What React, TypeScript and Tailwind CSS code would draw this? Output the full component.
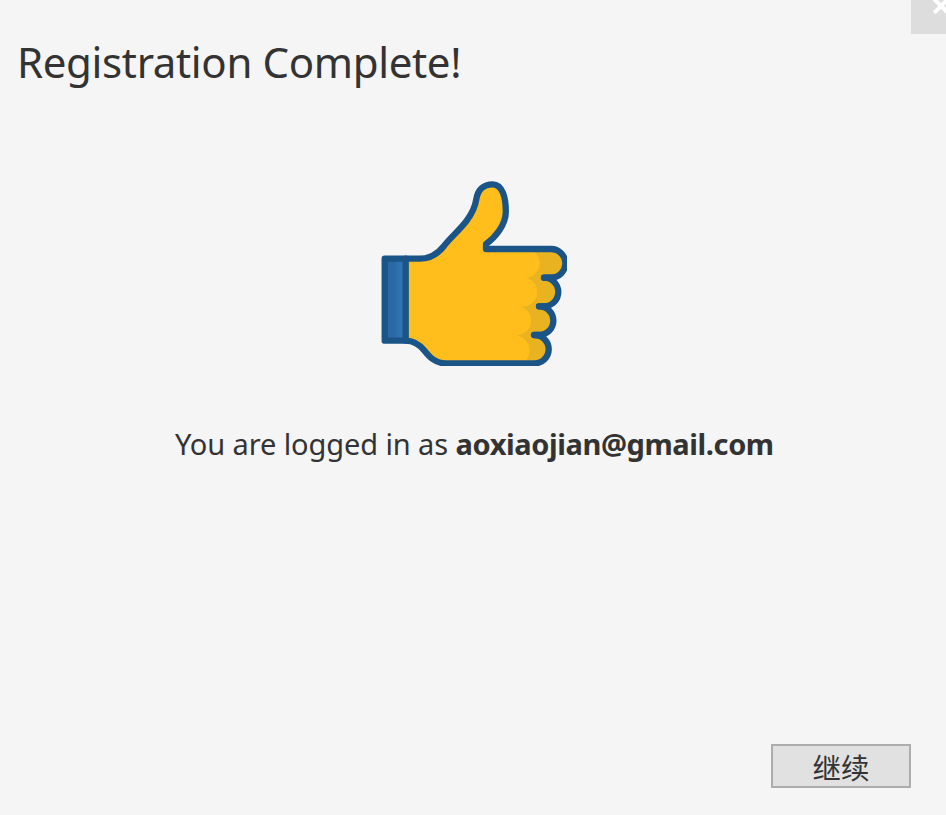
function ThumbsUp() {
  return (
    <svg className="block h-[185px] w-[186px]" viewBox="0 0 186 185" fill="none" aria-hidden="true">
      <defs>
        <linearGradient id="cuff" x1="0" x2="1">
          <stop offset="0.45" stopColor="#2b69a6" />
          <stop offset="0.75" stopColor="#3074b4" />
        </linearGradient>
        <clipPath id="hand">
          <path d="M24.7 77.7H39C49 77.7 57.3 72.3 63 65C69 56.7 78.3 49.7 85.7 39.7C92.3 30.7 94.3 25 95.3 18.3C96.7 9 102.3 3.3 111.7 3.3C121.7 3.3 124.8 17.3 124.8 30.7C124.8 44 114 56.7 105 63V68H170A14.3 14.3 0 0 1 170 96.7H163A14.3 14.3 0 0 1 163 125.3H158A14.3 14.3 0 0 1 158 154H153.5A14.2 14.2 0 0 1 153.5 182.4H65C54 182.4 48.3 175.7 43.5 169.7C38.5 163.7 33 159.7 24.7 159.7Z" />
        </clipPath>
      </defs>
      <g clipPath="url(#hand)">
        <rect width="186" height="185" fill="#e8b221" />
        <path
          d="M0 0H140V68H144.4A14.3 14.3 0 0 1 144.4 96.7H145A14.3 14.3 0 0 1 138 125.3A14.3 14.3 0 0 1 133 154A14.3 14.3 0 0 1 133 185H0Z"
          fill="#ffbe1b"
        />
      </g>
      <path d="M3.7 77.7H24.7V159.7H3.7Z" fill="url(#cuff)" />
      <g stroke="#1b5487" strokeWidth="6.3" strokeLinecap="round" strokeLinejoin="round">
        <path d="M3.7 77.7H24.7V159.7H3.7Z" />
        <path d="M24.7 77.7H39C49 77.7 57.3 72.3 63 65C69 56.7 78.3 49.7 85.7 39.7C92.3 30.7 94.3 25 95.3 18.3C96.7 9 102.3 3.3 111.7 3.3C121.7 3.3 124.8 17.3 124.8 30.7C124.8 44 114 56.7 105 63V68H170A14.3 14.3 0 0 1 170 96.7H163A14.3 14.3 0 0 1 163 125.3H158A14.3 14.3 0 0 1 158 154H153.5A14.2 14.2 0 0 1 153.5 182.4H65C54 182.4 48.3 175.7 43.5 169.7C38.5 163.7 33 159.7 24.7 159.7" />
        <path d="M172 96.7H163M163 125.3H158M158 154H153" />
      </g>
    </svg>
  );
}

export default function App() {
  return (
    <main className="relative flex h-[815px] w-[946px] flex-col overflow-hidden bg-[#f5f5f5] font-['Noto_Sans','Noto_Sans_CJK_SC',sans-serif] text-[#333333]">
      <button aria-label="Close" className="absolute top-0 left-[911px] h-[34px] w-[35px] overflow-hidden bg-[#dddddd]">
        <svg className="block h-[34px] w-[35px]" viewBox="0 0 35 34" stroke="#ffffff" strokeWidth="4">
          <path d="M23.2 12.8L37 -1M23.2 -1L37 12.8" />
        </svg>
      </button>
      <h1 className="mt-[31px] ml-[17px] h-[62px] text-[42px] leading-[62px] tracking-[-0.35px] whitespace-nowrap">Registration Complete!</h1>
      <div className="mt-[88px] ml-[381px]">
        <ThumbsUp />
      </div>
      <p className="mt-[58px] ml-[175px] text-[29px] leading-10 whitespace-nowrap">
        <span className="tracking-[-0.1px]">You are logged in as </span>
        <b className="font-bold tracking-[-0.4px]">aoxiaojian@gmail.com</b>
      </p>
      <button className="mt-auto mr-[35px] mb-[27px] flex h-11 w-[140px] items-center justify-center self-end border-2 border-[#adadad] bg-[#e1e1e1] pt-0.5 font-['Noto_Sans_CJK_SC',sans-serif] text-[28.5px] leading-9">
        继续
      </button>
    </main>
  );
}
